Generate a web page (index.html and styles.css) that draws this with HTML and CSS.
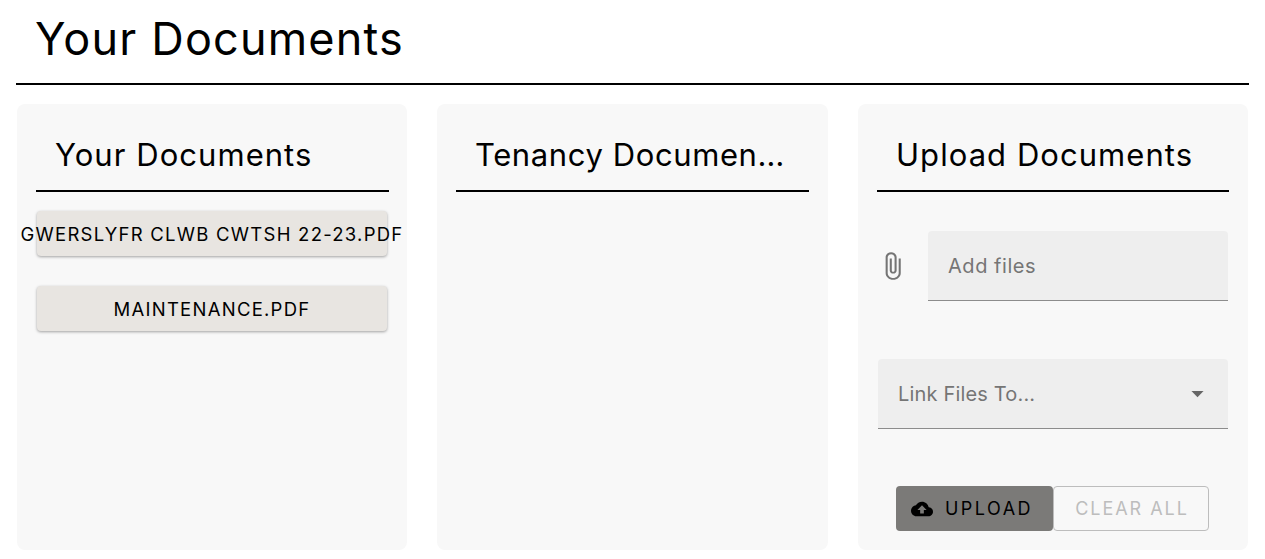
FILE: index.html
```html
<!DOCTYPE html>
<html>
	<head>
		<meta charset="UTF-8">
		<title>Your Documents</title>
		<link rel="stylesheet" href="styles.css">
	</head>
	<body>
		<div class="page">
			<h1 class="title">Your Documents</h1>

			<div class="cards">
				<div class="card">
					<h2 class="card-title">Your Documents</h2>
					<div class="docs">
						<div class="doc">GWERSLYFR CLWB CWTSH 22-23.PDF</div>
						<div class="doc">MAINTENANCE.PDF</div>
					</div>
				</div>

				<div class="card">
					<h2 class="card-title tight">Tenancy Documen…</h2>
				</div>

				<div class="card">
					<h2 class="card-title">Upload Documents</h2>
					<div class="file-row">
						<svg class="clip" viewBox="0 0 24 24" preserveAspectRatio="none"><path d="M16.5 6v11.5c0 2.21-1.79 4-4 4s-4-1.79-4-4V5c0-1.38 1.12-2.5 2.5-2.5s2.5 1.12 2.5 2.5v10.5c0 .55-.45 1-1 1s-1-.45-1-1V6H10v9.5c0 1.38 1.12 2.5 2.5 2.5s2.5-1.12 2.5-2.5V5c0-2.21-1.79-4-4-4S7 2.79 7 5v12.5c0 3.04 2.46 5.5 5.5 5.5s5.5-2.46 5.5-5.5V6h-1.5z"/></svg>
						<div class="field grow">Add files</div>
					</div>
					<div class="field select">
						<span>Link Files To...</span>
						<svg class="arrow" viewBox="0 0 24 24"><path d="M7 10l5 5 5-5z"/></svg>
					</div>
					<div class="btns">
						<div class="btn upload">
							<svg class="cloud" viewBox="0 0 24 24"><path d="M19.35 10.04C18.67 6.59 15.64 4 12 4 9.11 4 6.6 5.64 5.35 8.04 2.34 8.36 0 10.91 0 14c0 3.31 2.69 6 6 6h13c2.76 0 5-2.24 5-5 0-2.64-2.05-4.78-4.65-4.96zM14 13v4h-4v-4H7l5-5 5 5h-3z"/></svg>
							UPLOAD
						</div>
						<div class="btn clear">CLEAR ALL</div>
					</div>
				</div>
			</div>
		</div>
	</body>
</html>
```

FILE: styles.css
```css
*{
	box-sizing: border-box;
}
body{
	margin: 0;
	background-color: #fff;
	color: #000;
	font-family: "Inter", "Liberation Sans", sans-serif;
}
.page{
	padding: 0 16px;
}
.title{
	margin: 0;
	height: 85px;
	padding: 13px 0 0 19px;
	border-bottom: 2px solid #000;
	font-size: 45px;
	line-height: 52px;
	font-weight: 400;
	letter-spacing: 1.19px;
}
.cards{
	display: grid;
	grid-template-columns: 390px 391px 390px;
	column-gap: 30px;
	margin: 19px 0 0 1px;
}
.card{
	height: 446px;
	padding: 0 19px;
	background-color: #f8f8f8;
	border-radius: 8px;
	min-width: 0;
}
.card:first-child{
	padding-right: 18px;
}
.card-title{
	margin: 0;
	height: 88px;
	padding: 31px 18px 0 19px;
	border-bottom: 2px solid #000;
	font-size: 31px;
	line-height: 40px;
	font-weight: 400;
	letter-spacing: 1.05px;
	white-space: nowrap;
}
.tight{
	letter-spacing: 0.6px;
}
.docs{
	display: flex;
	flex-direction: column;
	gap: 30px;
	padding: 19px 2px 0 1px;
}
.doc{
	display: flex;
	justify-content: center;
	align-items: center;
	height: 45px;
	padding-top: 1px;
	background-color: #e8e5e1;
	border-radius: 4px;
	box-shadow: 0 1px 3px rgba(0,0,0,0.35);
	font-size: 18.5px;
	letter-spacing: 1.25px;
	white-space: nowrap;
}
.file-row{
	display: flex;
	align-items: center;
	margin: 39px 1px 0 -1px;
}
.clip{
	width: 33px;
	height: 30px;
	margin-right: 19px;
	fill: #757575;
	flex: none;
}
.field{
	display: flex;
	align-items: center;
	justify-content: space-between;
	height: 70px;
	padding: 0 20px;
	background-color: #eee;
	border-bottom: 1px solid #8c8c8c;
	border-radius: 4px 4px 0 0;
	color: #757575;
	font-size: 20px;
}
.grow{
	flex: 1;
	letter-spacing: 0.55px;
}
.select{
	margin: 58px 1px 0 1px;
	padding-right: 16px;
	letter-spacing: 0.17px;
}
.arrow{
	width: 29px;
	height: 29px;
	fill: #666;
	flex: none;
}
.btns{
	display: flex;
	margin: 57px 0 0 19px;
}
.btn{
	display: flex;
	align-items: center;
	justify-content: center;
	height: 45px;
	border-radius: 4px;
	font-size: 18px;
}
.upload{
	width: 157px;
	padding-right: 5px;
	background-color: #7b7a78;
	letter-spacing: 2.5px;
}
.cloud{
	width: 22px;
	height: 22px;
	margin-right: 12px;
}
.clear{
	width: 156px;
	padding-left: 2px;
	border: 1px solid #bdbdbd;
	color: #bdbdbd;
	letter-spacing: 1.95px;
}
```
